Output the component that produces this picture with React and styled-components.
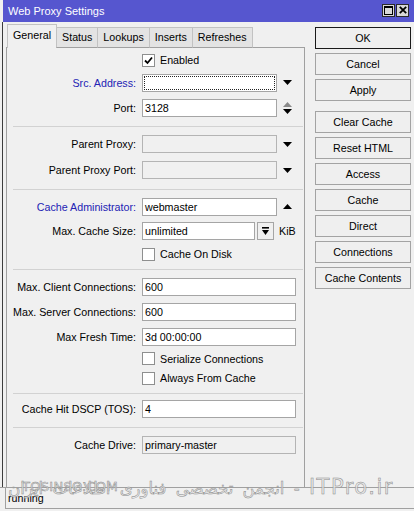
import React from "react";
import styled, { createGlobalStyle } from "styled-components";

const GlobalStyle = createGlobalStyle`
  html, body {
    margin: 0;
    padding: 0;
    background: #f0f0f0;
  }
  body {
    font-family: "Liberation Sans", Arial, sans-serif;
    font-size: 10.7px;
    color: #000;
  }
`;

const Page = styled.div`
  position: relative;
  width: 414px;
  height: 511px;
  overflow: hidden;
  background: #f0f0f0;
  display: flex;
  flex-direction: column;
`;

/* ---------- title bar ---------- */
const TitleBar = styled.div`
  height: 22px;
  margin-left: 3px;
  padding: 0 5px 0 5px;
  background: #5656cf;
  color: #fff;
  font-size: 11px;
  display: flex;
  align-items: center;
  justify-content: space-between;
  flex-shrink: 0;
`;

const CaptionGroup = styled.div`
  display: flex;
  gap: 1px;
  margin-top: -2px;
`;

const CaptionButton = styled.div`
  width: 13px;
  height: 13px;
  box-sizing: border-box;
  background: #d8d8d8;
  border: 1px solid #2a2a2a;
  display: flex;
  align-items: center;
  justify-content: center;
`;

/* ---------- window body ---------- */
const Frame = styled.div`
  display: flex;
  height: 465px;
  margin-left: 2px;
  border-left: 1px solid #3c3c3c;
  flex-shrink: 0;
`;

const LeftCol = styled.div`
  width: 302px;
  padding-left: 3px;
  box-sizing: border-box;
  display: flex;
  flex-direction: column;
`;

const TabStrip = styled.div`
  height: 26px;
  margin-bottom: -1px;
  padding-left: 1px;
  display: flex;
  align-items: flex-end;
  position: relative;
  z-index: 1;
`;

const Tab = styled.div`
  height: ${(p) => (p.$active ? 24 : 21)}px;
  box-sizing: border-box;
  padding: 0 5px ${(p) => (p.$active ? 3 : 1)}px;
  margin-left: ${(p) => (p.$first ? 0 : -1)}px;
  display: flex;
  align-items: center;
  background: ${(p) => (p.$active ? "#f0f0f0" : "#e3e3e3")};
  border: 1px solid #c2c2c2;
  border-bottom: ${(p) => (p.$active ? "none" : "1px solid #a0a0a0")};
  white-space: nowrap;
`;

const Panel = styled.div`
  flex: 1;
  border: 1px solid #a0a0a0;
  border-bottom: none;
  background: #f0f0f0;
  display: flex;
  flex-direction: column;
`;

const Section = styled.div`
  padding-top: ${(p) => p.$pt}px;
  padding-bottom: ${(p) => p.$pb || 0}px;
  display: flex;
  flex-direction: column;
`;

const Separator = styled.div`
  height: 1px;
  margin: 0 1px 0 6px;
  background: #d2d2d2;
  flex-shrink: 0;
`;

const Row = styled.div`
  height: ${(p) => p.$h}px;
  display: flex;
  align-items: center;
`;

const Label = styled.div`
  width: 129px;
  flex-shrink: 0;
  text-align: right;
  white-space: nowrap;
  color: ${(p) => (p.$accent ? "#2323b4" : "#000")};
  margin-right: 6px;
`;

const Input = styled.div`
  position: relative;
  width: ${(p) => p.$w}px;
  height: 18px;
  box-sizing: border-box;
  border: 1px solid ${(p) => (p.$disabled ? "#b4b4b4" : "#a5a5a5")};
  background: ${(p) => (p.$disabled ? "#f0f0f0" : "#fff")};
  padding-left: 2px;
  display: flex;
  align-items: center;
  white-space: nowrap;
  flex-shrink: 0;

  ${(p) =>
    p.$focused &&
    `
    &::after {
      content: "";
      position: absolute;
      inset: 1px;
      border: 1px dotted #222;
    }
  `}
`;

const Suffix = styled.div`
  margin-left: ${(p) => p.$gap ?? 6}px;
  display: flex;
  align-items: center;
`;

const SpinButton = styled.div`
  width: 17px;
  height: 18px;
  box-sizing: border-box;
  margin-left: 2px;
  border: 1px solid #a5a5a5;
  background: #f0f0f0;
  display: flex;
  align-items: center;
  justify-content: center;
`;

const Unit = styled.span`
  margin-left: 5px;
`;

const CheckBox = styled.div`
  width: 13px;
  height: 13px;
  box-sizing: border-box;
  border: 1px solid #8e8f8f;
  background: #fff;
  display: flex;
  align-items: center;
  justify-content: center;
  flex-shrink: 0;
`;

const CheckText = styled.span`
  margin-left: 5px;
`;

/* ---------- buttons column ---------- */
const ButtonCol = styled.div`
  width: 96px;
  margin-left: 10px;
  padding-top: 5px;
  display: flex;
  flex-direction: column;
  gap: 4px;
`;

const ActionButton = styled.div`
  height: 22px;
  box-sizing: border-box;
  margin-top: ${(p) => (p.$spaced ? 6 : 0)}px;
  border: 1px solid ${(p) => (p.$default ? "#1a1a1a" : "#a3a3a3")};
  background: #efefef;
  display: flex;
  align-items: center;
  justify-content: center;
  white-space: nowrap;
`;

/* ---------- status bar ---------- */
const StatusBar = styled.div`
  height: 22px;
  box-sizing: border-box;
  border-top: 1px solid #a0a0a0;
  padding-left: 5px;
  display: flex;
  flex-shrink: 0;
`;

const StatusCell = styled.div`
  flex: 1;
  border-left: 1px solid #a0a0a0;
  border-bottom: 1px solid #a0a0a0;
  padding-left: 2px;
  display: flex;
  align-items: center;
`;

/* ---------- site watermark over the bottom edge ---------- */
const SiteMark = styled.span`
  position: absolute;
  left: 22px;
  top: 479px;
  font-family: "DejaVu Sans", sans-serif;
  font-size: 13px;
  letter-spacing: 0.3px;
  color: rgba(232, 232, 232, 0.85);
  -webkit-text-stroke: 0.5px #8a8a8a;
  pointer-events: none;
`;

const ForumMark = styled.div`
  position: absolute;
  right: 20px;
  top: 475px;
  direction: rtl;
  white-space: nowrap;
  font-family: "DejaVu Sans", sans-serif;
  font-size: 16.5px;
  word-spacing: 4px;
  color: rgba(232, 232, 232, 0.85);
  -webkit-text-stroke: 0.5px #8a8a8a;
  pointer-events: none;
`;

const Latin = styled.span`
  font-size: 21px;
  letter-spacing: 1.5px;
  word-spacing: 0;
`;

/* ---------- small glyphs ---------- */
const ArrowDown = ({ color = "#000" }) => (
  <svg width="9" height="5" viewBox="0 0 9 5">
    <path d="M0 0 H9 L4.5 5 Z" fill={color} />
  </svg>
);

const ArrowUp = ({ color = "#000" }) => (
  <svg width="9" height="5" viewBox="0 0 9 5">
    <path d="M0 5 H9 L4.5 0 Z" fill={color} />
  </svg>
);

const UpDown = () => (
  <svg width="9" height="12" viewBox="0 0 9 12">
    <path d="M0 5 H9 L4.5 0 Z" fill="#8a8a8a" />
    <path d="M0 7 H9 L4.5 12 Z" fill="#000" />
  </svg>
);

const BarArrowDown = () => (
  <svg width="7" height="8" viewBox="0 0 7 8">
    <rect x="0" y="0" width="7" height="1.6" fill="#000" />
    <path d="M0 3 H7 L3.5 8 Z" fill="#000" />
  </svg>
);

const CheckMark = () => (
  <svg width="9" height="9" viewBox="0 0 9 9">
    <path d="M1 4.5 L3.5 7 L8 1.5" fill="none" stroke="#000" strokeWidth="1.8" />
  </svg>
);

const MaximizeGlyph = () => (
  <svg width="9" height="9" viewBox="0 0 9 9">
    <rect x="0.5" y="0.5" width="8" height="8" fill="none" stroke="#000" />
    <rect x="0" y="0" width="9" height="2" fill="#000" />
  </svg>
);

const CloseGlyph = () => (
  <svg width="8" height="8" viewBox="0 0 8 8">
    <path d="M0.8 0.8 L7.2 7.2 M7.2 0.8 L0.8 7.2" stroke="#000" strokeWidth="1.8" />
  </svg>
);

const tabs = ["General", "Status", "Lookups", "Inserts", "Refreshes"];

const buttons = [
  { label: "OK", default: true },
  { label: "Cancel" },
  { label: "Apply" },
  { label: "Clear Cache", spaced: true },
  { label: "Reset HTML" },
  { label: "Access" },
  { label: "Cache" },
  { label: "Direct" },
  { label: "Connections" },
  { label: "Cache Contents" },
];

const CheckRow = ({ h, checked, children }) => (
  <Row $h={h}>
    <Label />
    <CheckBox>{checked && <CheckMark />}</CheckBox>
    <CheckText>{children}</CheckText>
  </Row>
);

export default function App() {
  return (
    <Page>
      <GlobalStyle />
      <TitleBar>
        <span>Web Proxy Settings</span>
        <CaptionGroup>
          <CaptionButton>
            <MaximizeGlyph />
          </CaptionButton>
          <CaptionButton>
            <CloseGlyph />
          </CaptionButton>
        </CaptionGroup>
      </TitleBar>

      <Frame>
        <LeftCol>
          <TabStrip>
            {tabs.map((t, i) => (
              <Tab key={t} $active={i === 0} $first={i === 0}>
                {t}
              </Tab>
            ))}
          </TabStrip>
          <Panel>
            <Section $pt={2} $pb={6}>
              <CheckRow h={20} checked>
                Enabled
              </CheckRow>
              <Row $h={25}>
                <Label $accent>Src. Address:</Label>
                <Input $w={135} $focused />
                <Suffix>
                  <ArrowDown />
                </Suffix>
              </Row>
              <Row $h={25}>
                <Label>Port:</Label>
                <Input $w={135}>3128</Input>
                <Suffix>
                  <UpDown />
                </Suffix>
              </Row>
            </Section>
            <Separator />

            <Section $pt={4} $pb={6}>
              <Row $h={26}>
                <Label>Parent Proxy:</Label>
                <Input $w={135} $disabled />
                <Suffix>
                  <ArrowDown />
                </Suffix>
              </Row>
              <Row $h={26}>
                <Label>Parent Proxy Port:</Label>
                <Input $w={135} $disabled />
                <Suffix>
                  <ArrowDown />
                </Suffix>
              </Row>
            </Section>
            <Separator />

            <Section $pt={4} $pb={4}>
              <Row $h={25}>
                <Label $accent>Cache Administrator:</Label>
                <Input $w={135}>webmaster</Input>
                <Suffix>
                  <ArrowUp />
                </Suffix>
              </Row>
              <Row $h={24}>
                <Label>Max. Cache Size:</Label>
                <Input $w={113}>unlimited</Input>
                <SpinButton>
                  <BarArrowDown />
                </SpinButton>
                <Unit>KiB</Unit>
              </Row>
              <CheckRow h={22}>Cache On Disk</CheckRow>
            </Section>
            <Separator />

            <Section $pt={4} $pb={5}>
              <Row $h={25}>
                <Label>Max. Client Connections:</Label>
                <Input $w={154}>600</Input>
              </Row>
              <Row $h={25}>
                <Label>Max. Server Connections:</Label>
                <Input $w={154}>600</Input>
              </Row>
              <Row $h={25}>
                <Label>Max Fresh Time:</Label>
                <Input $w={154}>3d 00:00:00</Input>
              </Row>
              <CheckRow h={19}>Serialize Connections</CheckRow>
              <CheckRow h={20}>Always From Cache</CheckRow>
            </Section>
            <Separator />

            <Section $pt={3} $pb={6}>
              <Row $h={24}>
                <Label>Cache Hit DSCP (TOS):</Label>
                <Input $w={154}>4</Input>
              </Row>
            </Section>
            <Separator />

            <Section $pt={4}>
              <Row $h={26}>
                <Label>Cache Drive:</Label>
                <Input $w={154} $disabled>
                  primary-master
                </Input>
              </Row>
            </Section>
          </Panel>
        </LeftCol>

        <ButtonCol>
          {buttons.map((b) => (
            <ActionButton key={b.label} $default={b.default} $spaced={b.spaced}>
              {b.label}
            </ActionButton>
          ))}
        </ButtonCol>
      </Frame>

      <StatusBar>
        <StatusCell>running</StatusCell>
      </StatusBar>

      <SiteMark>TOSINSO.COM</SiteMark>
      <ForumMark>
        <Latin>ITPro.ir</Latin> - انجمن تخصصی فناوری اطلاعات ایران
      </ForumMark>
    </Page>
  );
}
